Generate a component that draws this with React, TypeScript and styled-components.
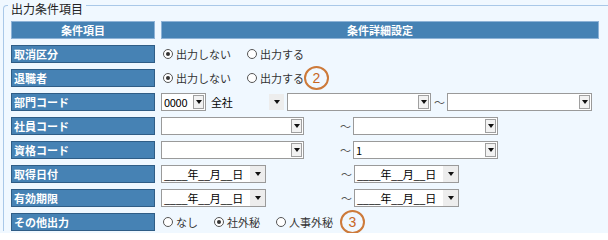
import styled, { createGlobalStyle } from 'styled-components';

const GlobalStyle = createGlobalStyle`
  body {
    margin: 0;
    background: #ffffff;
    font-family: "Noto Sans CJK JP", "Liberation Sans", sans-serif;
  }
`;

type Choice = { label: string; on?: boolean };

function RadioSet({ items }: { items: Choice[] }) {
  return (
    <>
      {items.map((it) => (
        <Radio key={it.label}>
          <Dot $on={!!it.on} />
          <span>{it.label}</span>
        </Radio>
      ))}
    </>
  );
}

function Select({
  w,
  value = '',
  flat,
  bare,
}: {
  w: number;
  value?: string;
  flat?: boolean;
  bare?: boolean;
}) {
  return (
    <SelectBox $w={w} $bare={!!bare}>
      <SelectValue>{value}</SelectValue>
      <ArrowBox $flat={!!flat}>
        <Triangle />
      </ArrowBox>
    </SelectBox>
  );
}

function DateSelect() {
  return <Select w={105} value="____年__月__日" flat />;
}

export default function App() {
  return (
    <>
      <GlobalStyle />
      <Page>
        <Frame>
          <Legend>出力条件項目</Legend>
          <Grid>
            <HeadCell>条件項目</HeadCell>
            <HeadCell>条件詳細設定</HeadCell>

            <LabelCell>取消区分</LabelCell>
            <ValueCell>
              <RadioSet items={[{ label: '出力しない', on: true }, { label: '出力する' }]} />
            </ValueCell>

            <LabelCell>退職者</LabelCell>
            <ValueCell>
              <RadioSet items={[{ label: '出力しない', on: true }, { label: '出力する' }]} />
              <Badge $gap={-14}>2</Badge>
            </ValueCell>

            <LabelCell>部門コード</LabelCell>
            <ValueCell>
              <Select w={45} value="0000" />
              <Spacer $w={2} />
              <Select w={77} value="全社" flat bare />
              <Spacer $w={2} />
              <Select w={144} />
              <Tilde $gap={3}>～</Tilde>
              <Select w={145} />
            </ValueCell>

            <LabelCell>社員コード</LabelCell>
            <ValueCell>
              <Select w={143} />
              <Tilde $gap={36}>～</Tilde>
              <Select w={145} />
            </ValueCell>

            <LabelCell>資格コード</LabelCell>
            <ValueCell>
              <Select w={143} />
              <Tilde $gap={36}>～</Tilde>
              <Select w={145} value="1" />
            </ValueCell>

            <LabelCell>取得日付</LabelCell>
            <ValueCell>
              <DateSelect />
              <Tilde $gap={75}>～</Tilde>
              <DateSelect />
            </ValueCell>

            <LabelCell>有効期限</LabelCell>
            <ValueCell>
              <DateSelect />
              <Tilde $gap={75}>～</Tilde>
              <DateSelect />
            </ValueCell>

            <LabelCell>その他出力</LabelCell>
            <ValueCell>
              <RadioSet
                items={[{ label: 'なし' }, { label: '社外秘', on: true }, { label: '人事外秘' }]}
              />
              <Badge $gap={-7}>3</Badge>
            </ValueCell>
          </Grid>
        </Frame>
      </Page>
    </>
  );
}

const Page = styled.div`
  width: 608px;
  height: 233px;
  overflow: hidden;
  background: #f0f8ff;
`;

const Frame = styled.fieldset`
  width: 640px;
  margin: 0 0 0 3px;
  padding: 10px 0 0 7px;
  border: 1px solid #a9c8e8;
  border-bottom: none;
  border-radius: 4px 0 0 0;
  min-inline-size: 0;
`;

const Legend = styled.legend`
  margin-left: -3px;
  padding: 6px 3px 0;
  font-size: 12px;
  line-height: 5px;
  color: #222;
`;

const Grid = styled.div`
  display: grid;
  grid-template-columns: 144px 438px;
  grid-auto-rows: 18px;
  gap: 6px 6px;
`;

const HeadCell = styled.div`
  box-sizing: border-box;
  background: #4682b4;
  border: 1px solid #8db2d6;
  color: #ffffff;
  font-size: 11px;
  font-weight: bold;
  display: flex;
  align-items: center;
  justify-content: center;
`;

const LabelCell = styled.div`
  box-sizing: border-box;
  background: #4682b4;
  border: 1px solid #2f5d86;
  color: #ffffff;
  font-size: 11px;
  font-weight: bold;
  display: flex;
  align-items: center;
  padding-left: 2px;
`;

const ValueCell = styled.div`
  display: flex;
  align-items: center;
  font-size: 11px;
  color: #333;
`;

const Radio = styled.label`
  display: inline-flex;
  align-items: center;
  gap: 3px;
  margin-left: 2px;
  margin-right: 14px;
  white-space: nowrap;
`;

const Dot = styled.span<{ $on: boolean }>`
  box-sizing: border-box;
  width: 10px;
  height: 10px;
  border: 1px solid #555;
  border-radius: 50%;
  background: #fff;
  display: inline-flex;
  align-items: center;
  justify-content: center;

  &::after {
    content: '';
    width: 4px;
    height: 4px;
    border-radius: 50%;
    background: ${(p) => (p.$on ? '#333' : 'transparent')};
  }
`;

const Badge = styled.span<{ $gap: number }>`
  box-sizing: border-box;
  width: 25px;
  height: 24px;
  margin-left: ${(p) => p.$gap}px;
  border: 2px solid #cd7a3a;
  border-radius: 50%;
  color: #c8661f;
  font-family: "Liberation Sans", sans-serif;
  font-size: 14px;
  display: inline-flex;
  align-items: center;
  justify-content: center;
  flex-shrink: 0;
`;

const SelectBox = styled.div<{ $w: number; $bare: boolean }>`
  box-sizing: border-box;
  width: ${(p) => p.$w}px;
  height: 18px;
  display: flex;
  align-items: center;
  background: ${(p) => (p.$bare ? 'transparent' : '#ffffff')};
  border: 1px solid ${(p) => (p.$bare ? 'transparent' : '#9a9a9a')};
  flex-shrink: 0;
`;

const SelectValue = styled.span`
  flex: 1;
  padding-left: 2px;
  font-size: 11px;
  color: #000;
  white-space: nowrap;
  overflow: hidden;
  letter-spacing: -0.3px;
`;

const ArrowBox = styled.span<{ $flat: boolean }>`
  box-sizing: border-box;
  width: ${(p) => (p.$flat ? 15 : 11)}px;
  height: ${(p) => (p.$flat ? 16 : 14)}px;
  margin-right: ${(p) => (p.$flat ? 0 : 1)}px;
  border: ${(p) => (p.$flat ? 'none' : '1px solid #a0a0a0')};
  background: ${(p) => (p.$flat ? '#ededed' : '#f2f2f2')};
  display: flex;
  align-items: center;
  justify-content: center;
`;

const Triangle = styled.span`
  width: 0;
  height: 0;
  border-left: 3.5px solid transparent;
  border-right: 3.5px solid transparent;
  border-top: 4px solid #111;
`;

const Spacer = styled.span<{ $w: number }>`
  width: ${(p) => p.$w}px;
  flex-shrink: 0;
`;

const Tilde = styled.span<{ $gap: number }>`
  width: 13px;
  margin-left: ${(p) => p.$gap}px;
  font-size: 11px;
  color: #555;
  flex-shrink: 0;
`;
